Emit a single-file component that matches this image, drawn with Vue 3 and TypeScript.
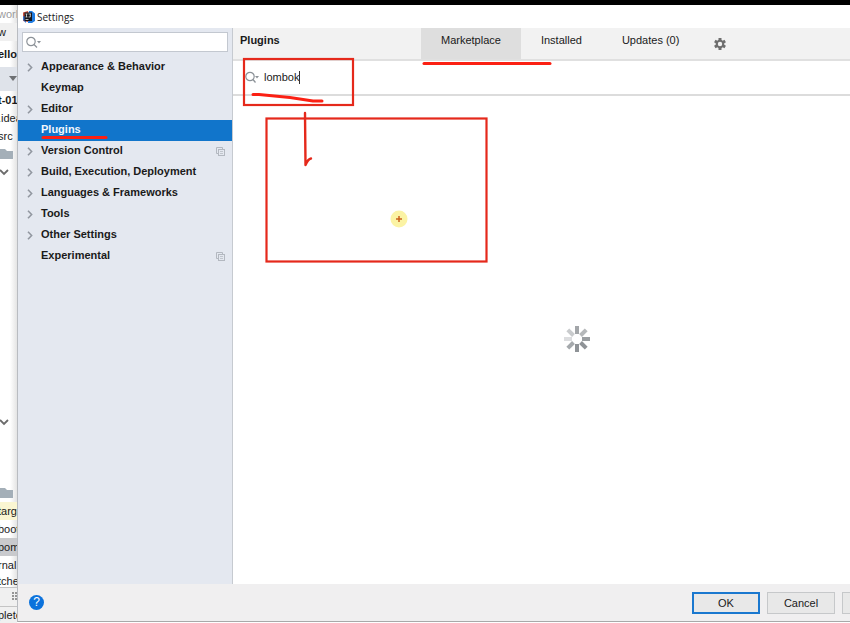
<script setup lang="ts">
import { ref } from 'vue'

interface Category {
  label: string
  expandable: boolean
  perProject?: boolean
}
interface StripRow {
  kind: 'text' | 'folder' | 'chevron' | 'arrow' | 'grip' | 'gap'
  text?: string
  tone?: string
}

const categories: Category[] = [
  { label: 'Appearance & Behavior', expandable: true },
  { label: 'Keymap', expandable: false },
  { label: 'Editor', expandable: true },
  { label: 'Plugins', expandable: false },
  { label: 'Version Control', expandable: true, perProject: true },
  { label: 'Build, Execution, Deployment', expandable: true },
  { label: 'Languages & Frameworks', expandable: true },
  { label: 'Tools', expandable: true },
  { label: 'Other Settings', expandable: true },
  { label: 'Experimental', expandable: false, perProject: true },
]
const tabs = ['Marketplace', 'Installed', 'Updates (0)']

const strip: StripRow[] = [
  { kind: 'text', text: 'work', tone: 'title' },
  { kind: 'text', text: 'w', tone: 'menu' },
  { kind: 'text', text: 'ello', tone: 'crumb' },
  { kind: 'arrow', tone: 'tool' },
  { kind: 'text', text: 't-01', tone: 'strong' },
  { kind: 'text', text: '.idea' },
  { kind: 'text', text: 'src' },
  { kind: 'folder' },
  { kind: 'chevron' },
  { kind: 'gap', tone: 'tall' },
  { kind: 'chevron' },
  { kind: 'gap', tone: 'short' },
  { kind: 'folder' },
  { kind: 'text', text: 'targ', tone: 'excluded' },
  { kind: 'text', text: 'boot' },
  { kind: 'text', text: 'pom', tone: 'selected' },
  { kind: 'text', text: 'rnal' },
  { kind: 'text', text: 'tche', tone: 'last' },
  { kind: 'grip', tone: 'bar' },
  { kind: 'text', text: 'plete', tone: 'status' },
]

const spokes = ['#a3a6a9', '#b5b8ba', '#9a9ea1', '#8f9397', '#8f9397', '#a5a9ac', '#dcdddf', '#c9cbcd']

const activeCategory = ref('Plugins')
const activeTab = ref('Marketplace')
const filter = ref('')
const query = ref('lombok')
</script>

<template>
  <div class="desktop">
    <div class="letterbox"></div>
    <div class="workspace">
      <aside class="strip" aria-label="Project">
        <div v-for="(row, i) in strip" :key="i" class="strip-row" :class="[row.kind, row.tone]">
          <span v-if="row.kind === 'text'">{{ row.text }}</span>
          <svg v-else-if="row.kind === 'folder'" width="14" height="12" viewBox="0 0 14 12">
            <path d="M0 1h5l2 2h6v8H0z" fill="#a4afb8" />
          </svg>
          <svg v-else-if="row.kind === 'chevron'" width="10" height="8" viewBox="0 0 10 8">
            <path d="M0 2l4 4 4-4" fill="none" stroke="#6b6b6b" stroke-width="1.8" />
          </svg>
          <svg v-else-if="row.kind === 'arrow'" width="8" height="6" viewBox="0 0 8 6">
            <path d="M0 0h8L4 5z" fill="#6e7073" />
          </svg>
          <svg v-else-if="row.kind === 'grip'" width="6" height="10" viewBox="0 0 6 10">
            <path d="M1 1h2M1 4h2M1 7h2M4 1h2M4 4h2M4 7h2" stroke="#777" stroke-width="1.5" />
          </svg>
        </div>
      </aside>

      <section class="dialog" role="dialog" aria-label="Settings">
        <header class="titlebar">
          <svg width="12" height="12" viewBox="0 0 12 12">
            <path d="M0 1.500L5 0l1 6-1 5-5-1z" fill="#c8503f" />
            <path d="M6 0h3l3 2.500V10l-3 2H5z" fill="#1f7be0" />
            <path d="M0 5l3 1v6L0 9z" fill="#3a6fc8" />
            <rect x="1.500" y="1.500" width="7.500" height="8.500" fill="#15151a" />
            <path d="M2.500 3h2M3.500 3v3M2.500 6h2M5.500 3H8M7.300 3v3H5.500M2.500 8.500h3" stroke="#ddd" stroke-width=".8" fill="none" />
          </svg>
          <span>Settings</span>
        </header>

        <div class="body">
          <nav class="sidebar">
            <label class="filter">
              <svg width="16" height="13" viewBox="0 0 16 13">
                <circle cx="5" cy="5.500" r="4.200" fill="none" stroke="#8c9298" stroke-width="1.200" />
                <path d="M8 8.500l3 3" stroke="#8c9298" stroke-width="1.300" />
                <path d="M11 5h4l-2 2.500z" fill="#8c9298" />
              </svg>
              <input v-model="filter" type="text" aria-label="Search settings" />
            </label>
            <ul class="tree">
              <li v-for="c in categories" :key="c.label">
                <button
                  type="button"
                  class="category"
                  :class="{ active: c.label === activeCategory }"
                  @click="activeCategory = c.label"
                >
                  <span class="twisty">
                    <svg v-if="c.expandable" width="6" height="9" viewBox="0 0 6 9">
                      <path d="M1 .8l3.600 3.700L1 8.200" fill="none" stroke="#9297a0" stroke-width="1.600" />
                    </svg>
                  </span>
                  <span class="name">{{ c.label }}</span>
                  <svg v-if="c.perProject" width="9" height="9" viewBox="0 0 9 9">
                    <path d="M2 6.500H.5v-6h6V2" fill="none" stroke="#b3b8c0" />
                    <rect x="2.500" y="2.500" width="6" height="6" fill="none" stroke="#b3b8c0" />
                    <path d="M4 4.500h3M4 6.500h3" stroke="#c0c5cc" />
                  </svg>
                </button>
              </li>
            </ul>
          </nav>

          <main class="content">
            <div class="heading">
              <h1>Plugins</h1>
              <div class="tabs" role="tablist">
                <button
                  v-for="t in tabs"
                  :key="t"
                  type="button"
                  role="tab"
                  class="tab"
                  :class="{ active: t === activeTab }"
                  :aria-selected="t === activeTab"
                  @click="activeTab = t"
                >{{ t }}</button>
              </div>
              <button type="button" class="gear" aria-label="Manage plugins">
                <svg width="12" height="12" viewBox="0 0 12 12">
                  <g fill="#6e6e6e">
                    <rect v-for="a in [0, 60, 120]" :key="a" x="4.500" y="0" width="3" height="12" :transform="`rotate(${a} 6 6)`" />
                  </g>
                  <circle cx="6" cy="6" r="3.300" fill="none" stroke="#6e6e6e" stroke-width="2" />
                  <circle cx="6" cy="6" r="2.200" fill="#f2f2f2" />
                </svg>
              </button>
            </div>
            <label class="search">
              <svg width="16" height="13" viewBox="0 0 16 13">
                <circle cx="5" cy="5.500" r="4.200" fill="none" stroke="#8c9298" stroke-width="1.200" />
                <path d="M8 8.500l2.500 3" stroke="#8c9298" stroke-width="1.300" />
                <path d="M10 5h4l-2 2.500z" fill="#8c9298" />
              </svg>
              <span class="field">
                <input v-model="query" type="text" aria-label="Search plugins" />
                <i class="caret"></i>
              </span>
            </label>
            <div class="results">
              <svg width="28" height="28" viewBox="-14 -14 28 28" role="img" aria-label="Loading">
                <rect
                  v-for="(color, i) in spokes"
                  :key="i"
                  x="-2"
                  y="-13"
                  width="4"
                  height="8"
                  :fill="color"
                  :transform="`rotate(${i * 45})`"
                />
              </svg>
            </div>
          </main>
        </div>

        <footer class="footer">
          <button type="button" class="help" aria-label="Help">?</button>
          <div class="actions">
            <button type="button" class="push primary">OK</button>
            <button type="button" class="push">Cancel</button>
            <button type="button" class="push" aria-label="Apply"></button>
          </div>
        </footer>
      </section>
    </div>

    <svg class="ink" width="600" height="270" viewBox="0 0 600 270" aria-hidden="true">
      <g fill="none" stroke="#e5291b" stroke-width="2.200">
        <rect x="244" y="59" width="109" height="46" />
        <rect x="266.500" y="118.500" width="220" height="143" />
      </g>
      <g fill="none" stroke="#fb2013" stroke-width="3" stroke-linecap="round" stroke-linejoin="round">
        <path d="M43 137.500H106" />
        <path d="M424 63.500H550" />
        <path d="M253 94.500h6q27 2 54 6.500h9" />
        <path d="M305 113L305.500 165Q308 159 311 158.500" stroke="#e5291b" stroke-width="2.400" />
      </g>
      <circle cx="399" cy="219" r="8.500" fill="#fbf3a4" />
      <path d="M396 219h6M399 216v6" stroke="#c9611c" stroke-width="1.500" />
    </svg>
  </div>
</template>

<style>
body {
  margin: 0;
  overflow: hidden;
}
</style>

<style scoped>
.desktop {
  position: relative;
  display: flex;
  flex-direction: column;
  height: 100vh;
  overflow: hidden;
  background: #fff;
  color: #1a1a1a;
  font-family: "Liberation Sans", Arial, sans-serif;
  font-size: 11px;
}
button,
input {
  font: inherit;
  color: inherit;
}
button {
  border: 0;
  padding: 0;
  background: none;
}
svg {
  display: block;
  flex: none;
}
.letterbox {
  flex: 0 0 5px;
  background: #000;
}
.workspace {
  flex: 1;
  min-height: 0;
  display: flex;
}

/* Editor window behind the dialog */
.strip {
  flex: 0 0 17px;
  display: flex;
  flex-direction: column;
  overflow: hidden;
  background: linear-gradient(90deg, #fff 10px, #e4e4e4);
}
.strip-row {
  flex: 0 0 18px;
  display: flex;
  align-items: center;
  overflow: hidden;
  white-space: nowrap;
}
.strip-row span {
  margin-left: -2px;
}
.title { color: #9b9b9b; }
.menu { background: #f0f0f0; }
.crumb { flex-basis: 26px; font-weight: bold; }
.tool { flex-basis: 24px; background: #dfe3ea; justify-content: flex-end; }
.strong { font-weight: bold; }
.tall { flex: 233 1 0; }
.short { flex: 53 1 0; }
.excluded { background: #faf6d2; }
.selected { background: #c9cacd; }
.last { flex-basis: 13px; }
.bar {
  flex-basis: 18px;
  justify-content: flex-end;
  border-top: 1px solid #c4c4c4;
  border-bottom: 1px solid #c4c4c4;
  background: #f0f0f0;
}
.status { flex-basis: 16px; background: #f0f0f0; }

/* The dialog runs past the right edge of the screen */
.dialog {
  flex: 0 0 calc(100% + 54px);
  box-sizing: border-box;
  display: flex;
  flex-direction: column;
  margin-bottom: 1px;
  border-left: 1px solid #b9bcc1;
  border-bottom: 1px solid #a9a9a9;
  background: #f0eff0;
}
.titlebar {
  flex: 0 0 23px;
  display: flex;
  align-items: center;
  gap: 2px;
  padding-left: 5px;
  background: #fff;
  font-family: "Open Sans", "Noto Sans", sans-serif;
  font-size: 10px;
}
.body {
  flex: 1;
  min-height: 0;
  display: flex;
}
.sidebar {
  flex: 0 0 214px;
  border-right: 1px solid #c6cad0;
  background: #e4e8f0;
}
.filter {
  display: flex;
  align-items: center;
  gap: 4px;
  height: 18px;
  margin: 4px 4px 5px;
  padding-left: 3px;
  border: 1px solid #c3c8d0;
  background: #fff;
}
.filter input {
  flex: 1;
  min-width: 0;
  border: 0;
  padding: 0;
  outline: 0;
  background: none;
}
.tree {
  list-style: none;
  margin: 0;
  padding: 0;
}
.category {
  display: flex;
  align-items: center;
  width: 100%;
  height: 21px;
  padding: 0 7px 0 9px;
  font-weight: bold;
  text-align: left;
}
.category.active {
  background: #1175cb;
  color: #f3f7fb;
}
.twisty {
  flex: 0 0 14px;
}
.name {
  flex: 1;
  padding-bottom: 4px;
  white-space: nowrap;
}
.content {
  flex: 1;
  min-width: 0;
  display: flex;
  flex-direction: column;
  background: #fff;
}
.heading {
  display: flex;
  height: 31px;
  border-bottom: 2px solid #e0e0e0;
  background: #f2f2f2;
}
h1 {
  flex: 0 0 181px;
  margin: 0;
  padding-left: 7px;
  font-size: 11px;
  line-height: 24px;
}
.tabs {
  display: flex;
}
.tab {
  padding: 0 20px 7px;
  line-height: 24px;
  white-space: nowrap;
}
.tab.active {
  background: #dedede;
}
.gear {
  padding: 0 15px;
}
.search {
  display: flex;
  align-items: center;
  gap: 3px;
  height: 33px;
  padding-left: 12px;
  border-bottom: 2px solid #dcdcdc;
}
.field {
  position: relative;
  flex: 1;
  padding-bottom: 2px;
}
.search input {
  display: block;
  width: 100%;
  border: 0;
  padding: 0;
  outline: 0;
  background: none;
}
.caret {
  position: absolute;
  left: 35px;
  top: 0;
  width: 1px;
  height: 13px;
  background: #333;
}
.results {
  flex: 1;
  display: flex;
  align-items: center;
  justify-content: center;
  padding-bottom: 2px;
}
.footer {
  flex: 0 0 37px;
  display: flex;
  align-items: center;
  justify-content: space-between;
  padding: 0 11px;
}
.help {
  width: 15px;
  height: 15px;
  border-radius: 50%;
  background: #0b72dc;
  color: #fff;
  font-size: 12px;
  line-height: 15px;
}
.actions {
  display: flex;
  gap: 7px;
}
.push {
  box-sizing: border-box;
  width: 68px;
  height: 22px;
  border: 1px solid #c6c8ca;
  background: #e8e8e8;
}
.primary {
  border: 2px solid #1a78cf;
}
.ink {
  position: absolute;
  left: 0;
  top: 0;
  pointer-events: none;
}
</style>
